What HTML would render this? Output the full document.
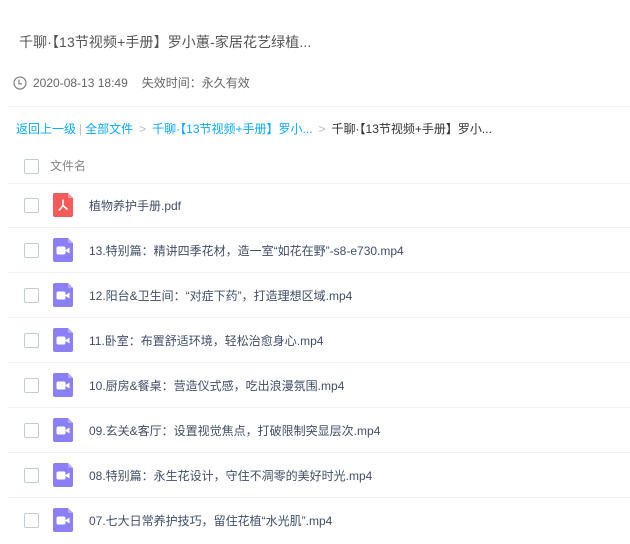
<!DOCTYPE html>
<html><head><meta charset="utf-8"><style>
body{margin:0;width:630px;height:544px;overflow:hidden;background:#fff;font-family:"Liberation Sans","Noto Sans CJK SC",sans-serif;}
.t{position:absolute;left:19px;top:32px;font-size:14px;color:#555;letter-spacing:0.1px;}
.d{position:absolute;left:13px;top:74px;font-size:12px;color:#666;display:flex;align-items:center;}
.hr{position:absolute;left:8px;width:622px;height:1px;background:#f0f0f2;}
.bc{position:absolute;left:16px;top:120px;font-size:12px;color:#09aaff;}
.bc .g{color:#bbb;margin:0 6px;}
.bc .k{color:#333;}
.cb{position:absolute;left:24px;width:13px;height:13px;border:1px solid #c3cbd6;border-radius:2px;}
.ic{position:absolute;left:53px;width:20px;height:24px;}
.nm{position:absolute;left:89px;font-size:12px;color:#424e67;}
</style></head><body>
<div class="t">千聊·【13节视频+手册】罗小蕙-家居花艺绿植...</div>
<div class="d"><svg width="14" height="14" viewBox="0 0 14 14" style="margin-right:6px"><circle cx="7" cy="7" r="6" fill="none" stroke="#888" stroke-width="1.3"/><path d="M6 3.5V7.8H9" fill="none" stroke="#888" stroke-width="1.3"/></svg>2020-08-13 18:49<span style="margin-left:14px">失效时间：永久有效</span></div>
<div class="hr" style="top:106px"></div>
<div class="bc">返回上一级<span style="color:#bbb;margin:0 3px">|</span>全部文件<span class="g">&gt;</span>千聊·【13节视频+手册】罗小...<span class="g">&gt;</span><span class="k">千聊·【13节视频+手册】罗小...</span></div>
<div class="cb" style="top:159px"></div>
<div style="position:absolute;left:50px;top:157px;font-size:12px;color:#888">文件名</div>
<div class="hr" style="top:183px"></div>
<div id="rows"></div>
<script>
var n=["植物养护手册.pdf","13.特别篇：精讲四季花材，造一室“如花在野”-s8-e730.mp4","12.阳台&amp;卫生间：“对症下药”，打造理想区域.mp4","11.卧室：布置舒适环境，轻松治愈身心.mp4","10.厨房&amp;餐桌：营造仪式感，吃出浪漫氛围.mp4","09.玄关&amp;客厅：设置视觉焦点，打破限制突显层次.mp4","08.特别篇：永生花设计，守住不凋零的美好时光.mp4","07.七大日常养护技巧，留住花植“水光肌”.mp4"];
var h="";
for(var i=0;i<n.length;i++){var c=205+45*i;
var col=i==0?"#f55b5b":"#8c7ff5", lt=i==0?"#f89a9a":"#b3aaf8";
var inner=i==0?'<path d="M10 6.5V12.5L6 17.5M10 12.5L14.5 16.5" fill="none" stroke="#fff" stroke-width="1.6"/>':'<rect x="3.5" y="8.5" width="9" height="8" rx="1.8" fill="#fff"/><path d="M12 12.5L16.5 9.5V15.5Z" fill="#fff"/>';
h+='<div class="cb" style="top:'+(c-7)+'px"></div><svg class="ic" style="top:'+(c-12)+'px" viewBox="0 0 20 24"><path d="M2 0H15L20 5V22A2 2 0 0 1 18 24H2A2 2 0 0 1 0 22V2A2 2 0 0 1 2 0Z" fill="'+col+'"/><path d="M15 0L20 5H16A1 1 0 0 1 15 4Z" fill="'+lt+'"/>'+inner+'</svg><div class="nm" style="top:'+(c-8)+'px">'+n[i]+'</div>';
if(i<7)h+='<div class="hr" style="top:'+(c+22)+'px"></div>';}
document.getElementById("rows").innerHTML=h;
</script>
</body></html>
